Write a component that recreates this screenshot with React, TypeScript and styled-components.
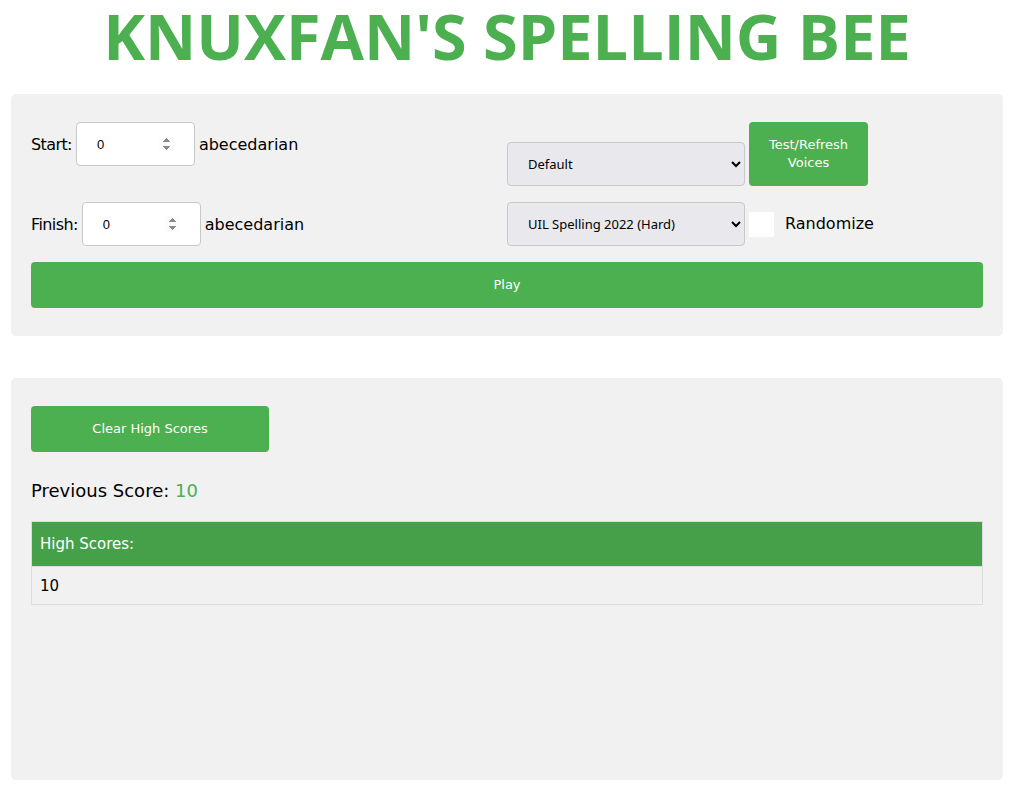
import React from "react";
import styled, { createGlobalStyle } from "styled-components";

const Global = createGlobalStyle`
  html, body { margin: 0; padding: 0; background: #ffffff; }
  body { font-family: "DejaVu Sans", sans-serif; color: #000; }
  * { box-sizing: border-box; }
`;

const Page = styled.div`
  padding: 0 21px 20px 11px;
`;

const Title = styled.h1`
  margin: 4px 0 26px;
  font-family: "Open Sans", sans-serif;
  font-weight: 700;
  font-size: 63px;
  line-height: 64px;
  color: #4caf50;
  text-align: center;
`;

const Panel = styled.section<{ $minHeight?: number }>`
  background: #f1f1f1;
  border-radius: 5px;
  padding: 28px 20px;
  min-height: ${(p) => (p.$minHeight ? `${p.$minHeight}px` : "auto")};
  & + & {
    margin-top: 42px;
  }
`;

const ControlsGrid = styled.div`
  display: grid;
  grid-template-columns: 1fr 1fr;
  row-gap: 16px;
`;

const LeftRow = styled.div`
  display: flex;
  align-items: center;
  align-self: start;
  gap: 4px;
  font-size: 16px;
`;

const FieldLabel = styled.span`
  letter-spacing: -0.6px;
`;

const RightRow = styled.div<{ $align: string }>`
  display: flex;
  align-items: ${(p) => p.$align};
  gap: 4px;
`;

const NumberInput = styled.input`
  width: 119px;
  height: 44px;
  margin: 0;
  padding: 0 20px;
  border: 1px solid #c8c8c8;
  border-radius: 4px;
  background: #fff;
  font-family: "Liberation Sans", Arial, sans-serif;
  font-size: 13px;
  color: #000;
  &::-webkit-inner-spin-button {
    opacity: 1;
  }
`;

const Select = styled.select`
  width: 238px;
  height: 44px;
  margin: 0;
  padding: 0 8px 0 16px;
  border: 1px solid #c8c8c8;
  border-radius: 4px;
  background: #e9e9ed;
  font-family: "Noto Sans", sans-serif;
  font-size: 13px;
  color: #000;
`;

const GreenButton = styled.button<{ $w?: string; $h: number }>`
  width: ${(p) => p.$w ?? "auto"};
  height: ${(p) => p.$h}px;
  margin: 0;
  padding: 0 12px;
  border: none;
  border-radius: 4px;
  background: #4caf50;
  color: #fff;
  font-family: "DejaVu Sans", sans-serif;
  font-size: 13px;
  line-height: 18px;
  cursor: pointer;
`;

const WideButton = styled(GreenButton)`
  grid-column: 1 / span 2;
`;

const Check = styled.input`
  appearance: none;
  width: 25px;
  height: 25px;
  margin: 0 7px 0 0;
  border: none;
  background: #fff;
  align-self: center;
`;

const CheckLabel = styled.span`
  font-size: 16px;
  align-self: center;
  margin-top: -2px;
`;

const ScoreHeading = styled.h3`
  margin: 28px 0 19px;
  font-size: 18px;
  font-weight: normal;
  line-height: 22px;
`;

const ScoreValue = styled.span`
  color: #4caf50;
`;

const Table = styled.table`
  width: 100%;
  border-collapse: collapse;
  border: 1px solid #dcdcdc;
`;

const Th = styled.th`
  height: 45px;
  padding: 0 8px;
  background: #46a049;
  color: #fff;
  text-align: left;
  font-weight: normal;
  font-size: 15px;
`;

const Td = styled.td`
  height: 38px;
  padding: 0 8px;
  font-size: 15px;
  border-top: 1px solid #dcdcdc;
`;

export default function App() {
  return (
    <Page>
      <Global />
      <Title>KNUXFAN'S SPELLING BEE</Title>
      <Panel>
        <ControlsGrid>
          <LeftRow>
            <FieldLabel>Start:</FieldLabel>
            <NumberInput type="number" defaultValue={0} />
            <span>abecedarian</span>
          </LeftRow>
          <RightRow $align="flex-end">
            <Select defaultValue="Default">
              <option>Default</option>
            </Select>
            <GreenButton $w="119px" $h={64}>
              Test/Refresh
              <br />
              Voices
            </GreenButton>
          </RightRow>
          <LeftRow>
            <FieldLabel>Finish:</FieldLabel>
            <NumberInput type="number" defaultValue={0} />
            <span>abecedarian</span>
          </LeftRow>
          <RightRow $align="stretch">
            <Select defaultValue="UIL Spelling 2022 (Hard)">
              <option>UIL Spelling 2022 (Hard)</option>
            </Select>
            <Check type="checkbox" />
            <CheckLabel>Randomize</CheckLabel>
          </RightRow>
          <WideButton $w="100%" $h={46}>
            Play
          </WideButton>
        </ControlsGrid>
      </Panel>
      <Panel $minHeight={402}>
        <GreenButton $w="238px" $h={46}>
          Clear High Scores
        </GreenButton>
        <ScoreHeading>
          Previous Score: <ScoreValue>10</ScoreValue>
        </ScoreHeading>
        <Table>
          <thead>
            <tr>
              <Th>High Scores:</Th>
            </tr>
          </thead>
          <tbody>
            <tr>
              <Td>10</Td>
            </tr>
          </tbody>
        </Table>
      </Panel>
    </Page>
  );
}
